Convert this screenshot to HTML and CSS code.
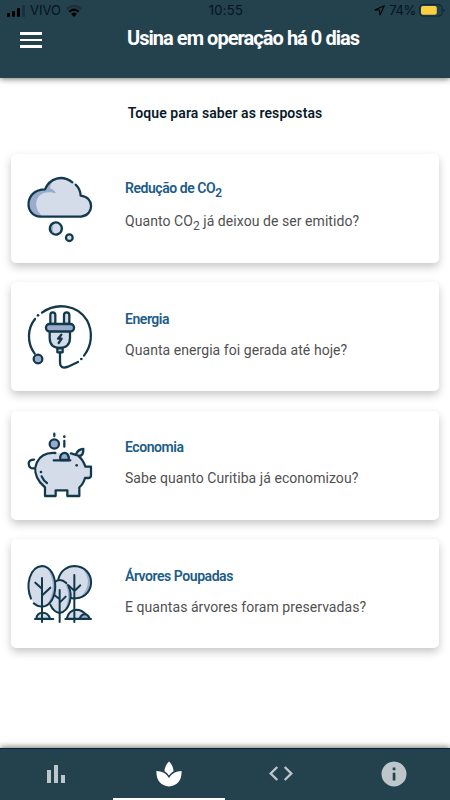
FILE: index.html
```html
<!DOCTYPE html>
<html lang="pt-BR">
<head>
    <meta charset="utf-8">
    <meta name="viewport" content="width=device-width, initial-scale=1.0">
    <title>Usina</title>
    <link rel="stylesheet" href="styles.css">
</head>
<body>

<header class="header">
    <div class="status">
        <div class="carrier">
            <svg width="18" height="12" viewBox="0 0 18 12">
                <rect x="0" y="8" width="3" height="4" rx="1"/>
                <rect x="5" y="6" width="3" height="6" rx="1"/>
                <rect x="10" y="3" width="3" height="9" rx="1"/>
                <rect x="15" y="0" width="3" height="12" rx="1" opacity=".25"/>
            </svg>
            <span class="vivo">VIVO</span>
            <svg width="16" height="12" viewBox="0 0 16 12" fill="none" stroke="#000" stroke-width="2.2">
                <path d="M.8 4Q8-2.2 15.2 4" opacity=".25"/>
                <path d="M3.3 6.8Q8 2.5 12.7 6.8"/>
                <path d="M5.2 9Q8 6.2 10.8 9L8 12Z" fill="#000" stroke="none"/>
            </svg>
        </div>
        <span class="clock">10:55</span>
        <div class="battery">
            <svg width="11" height="11" viewBox="0 0 11 11" fill="none" stroke="#000" stroke-width="1.1" stroke-linejoin="round">
                <path d="M10.3 .8L.8 5H5.5L6 10Z"/>
            </svg>
            <span class="percent">74%</span>
            <svg width="26" height="13" viewBox="0 0 26 13">
                <rect x=".6" y=".6" width="22.5" height="11.5" rx="3.4" fill="none" stroke="#0a2530" stroke-width="1"/>
                <rect x="2" y="2" width="15.8" height="8.8" rx="2" fill="#fbcf42"/>
                <path d="M24.4 4.5Q26.5 6.3 24.4 8.2Z" fill="#0a2530"/>
            </svg>
        </div>
    </div>
    <div class="toolbar">
        <div class="menu"><span></span><span></span><span></span></div>
        <h1>Usina em operação há 0 dias</h1>
    </div>
</header>

<main class="content">
    <h2>Toque para saber as respostas</h2>

    <div class="card">
        <svg class="icon" viewBox="54 48 192 192">
            <path class="fill" d="M83 167C45 163 46 90 105 85C121 44 180 40 204 79Q211 90 212 104C253 107 254 162 216 167Z"/>
            <path class="shade" d="M100 167C45 168 41 88 105 85Q115 62 134 53Q121 68 120 82Q132 85 138 97C74 78 63 142 100 167Z"/>
            <path d="M187 64C157 40 119 51 105 85C42 85 41 166 92 167H213C255 161 252 107 212 104Q211 84 197 71"/>
            <circle class="fill" cx="137" cy="202" r="18"/>
            <path class="shade" d="M133 186A17 17 0 0 0 133 218Q123 201 133 186Z"/>
            <path d="M123 213A18 18 0 1 1 127 217"/>
            <circle class="fill" cx="178" cy="230" r="10"/>
            <circle cx="178" cy="230" r="10"/>
        </svg>
        <div class="text with-sub">
            <h3>Redução de CO<sub>2</sub></h3>
            <p>Quanto CO<sub>2</sub> já deixou de ser emitido?</p>
        </div>
    </div>

    <div class="card">
        <svg class="icon" viewBox="54 45 192 192">
            <path d="M75 87C52 115 50 158 74 191M96 68C138 37 202 43 231 91C250 127 245 168 222 197"/>
            <circle class="dot" cx="84" cy="76" r="4"/>
            <circle class="dot" cx="214" cy="207" r="4"/>
            <circle class="shade line" cx="84" cy="207" r="13"/>
            <path class="fill line" d="M121 102V75Q121 67 128 67Q136 67 136 75V102ZM162 102V75Q162 67 170 67Q178 67 178 75V102Z"/>
            <path class="fill line" d="M119 124V145Q120 174 149 174Q179 174 180 145V124Z"/>
            <rect class="shade line" x="108" y="102" width="84" height="22" rx="10"/>
            <path class="fill line" d="M142 175H158V187H142Z"/>
            <path d="M150 187V216Q150 239 174 230L204 216M154 134L144 146H155L146 159"/>
        </svg>
        <div class="text">
            <h3>Energia</h3>
            <p>Quanta energia foi gerada até hoje?</p>
        </div>
    </div>

    <div class="card">
        <svg class="icon" viewBox="54 40 192 192">
            <path class="fill" d="M136 100C82 99 60 149 91 189L105 203V229H137V212H172V229H208V203L226 175L243 170V141H227L214 115L220 88L197 101Z"/>
            <path d="M136 100C82 96 58 149 91 189L105 203V229H137V212H172V229H208V203Q219 195 225 175H236Q243 175 243 166V141H226Q219 120 207 111M183 101L208 109Q221 108 220 88Q204 88 198 104M75 146Q57 149 56 132Q57 120 72 120M95 170Q101 184 111 190"/>
            <path class="shade line" d="M151 121C145 94 180 91 176 121Z"/>
            <path d="M131 122H181M133 42V49M163 64V81"/>
            <circle class="shade line" cx="133" cy="73" r="14"/>
            <circle class="dot" cx="163" cy="51" r="4"/>
            <circle class="dot" cx="93" cy="157" r="4"/>
            <circle class="dot" cx="200" cy="137" r="4"/>
        </svg>
        <div class="text">
            <h3>Economia</h3>
            <p>Sabe quanto Curitiba já economizou?</p>
        </div>
    </div>

    <div class="card">
        <svg class="icon trees" viewBox="54 50 192 192">
            <ellipse class="fill" cx="194" cy="110" rx="48" ry="48"/>
            <path class="shade" d="M215 66C252 77 256 145 212 155Q254 112 215 66Z"/>
            <path d="M145 101C152 75 173 62 194 62C258 65 260 153 198 159Q187 160 180 156"/>
            <ellipse class="fill" cx="149" cy="154" rx="33" ry="49"/>
            <path class="shade" d="M163 111C188 126 191 183 161 199Q187 154 163 111Z"/>
            <path d="M134 110C147 100 160 105 169 113M176 124C189 151 180 198 149 203Q130 200 121 178"/>
            <ellipse class="fill" cx="96" cy="123" rx="40" ry="61"/>
            <path class="shade" d="M111 67C145 80 147 167 111 179Q146 123 111 67Z"/>
            <path d="M63 160C46 119 59 65 96 62C149 65 149 180 96 184Q82 184 71 174"/>
            <path class="fill line" d="M79 220Q81 202 98 202Q115 202 120 220ZM170 220Q176 194 199 193Q216 193 228 208L237 220Z"/>
            <path class="shade line" d="M209 220Q214 207 224 207Q234 207 239 220Z"/>
            <path d="M75 221H130M166 221H243M96 98V230M76 112L96 130M121 127L97 150M149 134V230M134 150L149 162M167 154L149 172M193 89V230M174 119L193 136M211 120L194 136"/>
        </svg>
        <div class="text">
            <h3>Árvores Poupadas</h3>
            <p>E quantas árvores foram preservadas?</p>
        </div>
    </div>
</main>

<nav class="tabs">
    <a class="tab">
        <svg width="18" height="18" viewBox="0 0 18 18"><path d="M0 5H4V18H0ZM7 0H11V18H7ZM14 10H18V18H14Z"/></svg>
    </a>
    <a class="tab active">
        <svg width="26" height="26" viewBox="0 0 26 26">
            <path d="M13 .5Q8.5 5 8.5 10.2Q11 11.7 13 14.5Q15 11.7 17.5 10.2Q17.3 4.5 13 .5ZM.4 10Q.2 24 13 25.5Q25.8 24 25.6 10Q17 10.1 13 17Q9 10.1 .4 10Z"/>
        </svg>
    </a>
    <a class="tab">
        <svg width="24" height="15" viewBox="0 0 24 15" fill="none" stroke="#bdc6cb" stroke-width="2.4">
            <path d="M8.3 1L1.7 7.5L8.3 14M15.7 1L22.3 7.5L15.7 14"/>
        </svg>
    </a>
    <a class="tab">
        <svg width="26" height="26" viewBox="0 0 26 26">
            <path fill-rule="evenodd" d="M13 .5A12.5 12.5 0 1 1 13 25.5A12.5 12.5 0 1 1 13 .5ZM11.7 6.5V9.2H14.4V6.5ZM11.7 11.7V19.4H14.4V11.7Z"/>
        </svg>
    </a>
</nav>

</body>
</html>
```
FILE: styles.css
```css
* {
    box-sizing: border-box;
}

body {
    margin: 0;
    height: 800px;
    display: flex;
    flex-direction: column;
    overflow: hidden;
    background-color: #ffffff;
    font-family: Roboto, sans-serif;
}

h1, h2, h3, p {
    margin: 0;
}

svg {
    display: block;
    flex: none;
}

.header {
    height: 78px;
    background-color: #24414e;
    box-shadow: 0 1px 6px rgba(0, 0, 0, 0.55);
}

.status {
    display: grid;
    grid-template-columns: 1fr auto 1fr;
    align-items: center;
    height: 21px;
    padding: 0 5px 0 7px;
    font-family: Inter, sans-serif;
    font-size: 13px;
    line-height: 21px;
    color: #04151d;
}

.carrier, .battery {
    display: flex;
    align-items: center;
}

.battery {
    justify-content: flex-end;
}

.vivo {
    margin: 0 5px 0 5px;
}

.clock {
    letter-spacing: 0.3px;
}

.percent {
    margin: 0 3px 0 4px;
    letter-spacing: -0.3px;
}

.toolbar {
    display: flex;
    padding: 4px 0 0 20px;
}

.menu {
    display: flex;
    flex-direction: column;
    gap: 4px;
    width: 22px;
    margin: 7px 85px 0 0;
}

.menu span {
    height: 2.5px;
    background-color: #ffffff;
}

h1 {
    font-size: 20px;
    font-weight: 700;
    line-height: 26px;
    letter-spacing: -0.96px;
    white-space: nowrap;
    color: #ffffff;
}

.content {
    flex: 1;
    padding: 25px 11px 0;
}

h2 {
    height: 51px;
    font-size: 14px;
    font-weight: 600;
    line-height: 20px;
    letter-spacing: 0.08px;
    text-align: center;
    color: #091b2a;
}

.card {
    display: flex;
    align-items: center;
    height: 109px;
    margin-bottom: 19.4px;
    padding-left: 17px;
    border-radius: 5px;
    background-color: #ffffff;
    box-shadow: 0 4px 8px rgba(0, 0, 0, 0.22);
}

.icon {
    width: 64px;
    height: 64px;
    margin-right: 33px;
    overflow: visible;
    fill: none;
    stroke: #12394b;
    stroke-width: 6.8;
    stroke-linecap: round;
    stroke-linejoin: round;
}

.trees {
    stroke-width: 6;
}

.fill {
    fill: #d4dbe9;
    stroke: none;
}

.shade {
    fill: #9aaccb;
    stroke: none;
}

.line {
    stroke: #12394b;
}

.dot {
    fill: #12394b;
    stroke: none;
}

.text {
    padding-bottom: 5px;
}

.with-sub {
    padding-bottom: 8px;
}

h3 {
    font-size: 14px;
    font-weight: 600;
    line-height: 20px;
    letter-spacing: -0.45px;
    color: #1b5c87;
}

.text p {
    margin-top: 11px;
    font-size: 14px;
    line-height: 20px;
    letter-spacing: 0.06px;
    color: #505050;
}

.with-sub p {
    margin-top: 13px;
}

sub {
    font-size: 12px;
    line-height: 0;
}

.tabs {
    display: flex;
    height: 52px;
    border-top: 1px solid #0b2040;
    background-color: #24414e;
    box-shadow: 0 -1px 6px rgba(0, 0, 0, 0.55);
}

.tab {
    flex: 1;
    display: flex;
    align-items: center;
    justify-content: center;
    border-bottom: 2px solid transparent;
    fill: #bdc6cb;
}

.active {
    fill: #ffffff;
    border-color: #ffffff;
}
```
